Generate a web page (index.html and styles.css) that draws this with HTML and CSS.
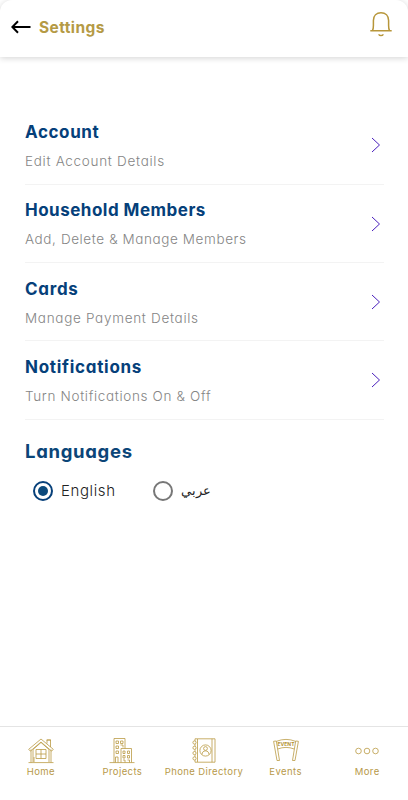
FILE: index.html
```html
<!DOCTYPE html>
<html lang="en">
<head>
<meta charset="utf-8">
<title>Settings</title>
<link rel="stylesheet" href="styles.css">
</head>
<body>
<div class="app">
  <header class="topbar">
    <svg class="back" width="20" height="14" viewBox="0 0 20 14"><path d="M19.5 7H1.5M7 1.2 1.3 7 7 12.8"/></svg>
    <h1>Settings</h1>
    <svg class="bell" width="24" height="28" viewBox="0 0 24 28"><path d="M1.3 20.8h21.4M3.500 20.500c.7-1.300.9-2.500.9-5V10.500C4.400 5.700 7.600 2.700 12 2.700s7.600 3 7.600 7.800v5c0 2.500.2 3.700.9 5M9.600 24.400c1.200 1.600 3.600 1.600 4.800 0"/></svg>
  </header>
  <main>
    <ul class="settings">
      <li><div><h2 class="t-account">Account</h2><p class="s-account">Edit Account Details</p></div><svg class="chevron" width="10" height="16" viewBox="0 0 10 16"><path d="M1 1l7.500 7L1 15"/></svg></li>
      <li><div><h2 class="t-household">Household Members</h2><p class="s-household">Add, Delete &amp; Manage Members</p></div><svg class="chevron" width="10" height="16" viewBox="0 0 10 16"><path d="M1 1l7.500 7L1 15"/></svg></li>
      <li><div><h2 class="t-cards">Cards</h2><p class="s-cards">Manage Payment Details</p></div><svg class="chevron" width="10" height="16" viewBox="0 0 10 16"><path d="M1 1l7.500 7L1 15"/></svg></li>
      <li><div><h2 class="t-notifications">Notifications</h2><p class="s-notifications">Turn Notifications On &amp; Off</p></div><svg class="chevron" width="10" height="16" viewBox="0 0 10 16"><path d="M1 1l7.500 7L1 15"/></svg></li>
    </ul>
    <h2 class="languages">Languages</h2>
    <div class="choices">
      <div class="choice english"><span class="radio on"></span><span>English</span></div>
      <div class="choice"><span class="radio"></span><span class="arabic" lang="ar" dir="rtl">عربي</span></div>
    </div>
  </main>
  <nav class="tabs">
    <div class="tab">
      <svg width="28" height="28" viewBox="0 0 28 28"><path d="M1.500 25.600h25M4 25.500V12.500M24 25.500V12.500M6 25V12.500L14 5.500l8 7V25M14 2 1.700 12.300l1.700 1.800L14 5l10.600 9.100 1.700-1.800zM20 6.500V3h3.500v7M19.500 3h4.500M9 12.500h10v9H9zM14 12.500v9M9 17h10M7 25v-5"/></svg>
      <span>Home</span>
    </div>
    <div class="tab">
      <svg width="28" height="28" viewBox="0 0 28 28"><path d="M1.500 25.600h25M6 25.500V1.500h11v10M13 25.500v-14h10.500v14M8 4h2.500v2.500H8zM12.500 4H15v2.500h-2.500zM8 9h2.500v2.500H8zM12.500 8H15v2.500M8 14h2.500v2.500H8zM7.500 25.500V20H10v5.500M15 14h2v2.500h-2zM19.500 14h2v2.500h-2zM15 18.500h2V21h-2zM19.500 18.500h2V21h-2zM15 23h2v2.500M19.500 23h2v2.500"/></svg>
      <span>Projects</span>
    </div>
    <div class="tab wide">
      <svg width="28" height="28" viewBox="0 0 28 28"><path d="M5 1.800h17v23.400H5zM22 1.800h3v23.400h-3M7.500 2v23"/><circle cx="15.500" cy="13.500" r="5.600"/><circle cx="15.500" cy="11.500" r="1.900"/><path d="M12 17.500c.2-2.300 1.200-3.600 3.500-3.600s3.300 1.300 3.500 3.600"/><g class="rings"><circle cx="4.500" cy="5.500" r="1.600"/><circle cx="4.500" cy="10.800" r="1.600"/><circle cx="4.500" cy="16.100" r="1.600"/><circle cx="4.500" cy="21.400" r="1.600"/></g></svg>
      <span>Phone Directory</span>
    </div>
    <div class="tab">
      <svg width="28" height="28" viewBox="0 0 28 28"><path d="M1.600 4.300l2.700-.3 3.200 19.500H5zM26.400 4.300l-2.700-.3-3.200 19.500H23zM4.500 4.300Q14 .5 23.500 4.300M5.800 12Q14 8.800 22.200 12"/><text class="banner" x="14" y="9" text-anchor="middle">EVENT</text></svg>
      <span>Events</span>
    </div>
    <div class="tab">
      <svg width="28" height="28" viewBox="0 0 28 28"><circle cx="5.500" cy="14" r="2.800"/><circle cx="14" cy="14" r="2.800"/><circle cx="22.500" cy="14" r="2.800"/></svg>
      <span>More</span>
    </div>
  </nav>
</div>
</body>
</html>
```
FILE: styles.css
```css
* { box-sizing: border-box; }
body { margin: 0; background: #fff; font-family: Inter, "Liberation Sans", sans-serif; font-feature-settings: "cv11" 1; }
h1, h2, p, ul { margin: 0; padding: 0; }
svg { display: block; flex: none; fill: none; }
.app { height: 800px; display: flex; flex-direction: column; overflow: hidden; }
.topbar { height: 57px; flex: none; display: flex; align-items: center; padding: 0 15px 3px 11px; border-radius: 12px 12px 0 0; box-shadow: 0 1px 6px rgba(0, 0, 0, .18); }
.back { stroke: #000; stroke-width: 2; }
.topbar h1 { margin: 1px 0 0 8px; font-size: 15.500px; font-weight: 700; color: #b59a45; line-height: 20px; flex: 1; letter-spacing: .4px; }
.bell { stroke: #b7963a; stroke-width: 1.500; margin-top: -6px; }
main { flex: 1; padding: 49.400px 24px 0 25px; }
.settings { list-style: none; }
.settings li { height: 78.300px; border-bottom: 1px solid #f3f3f3; display: flex; justify-content: space-between; padding: 15.700px 3px 0 0; }
.settings h2 { font-size: 17px; line-height: 20px; font-weight: 700; color: #05407a; letter-spacing: .6px; }
.settings .t-household { letter-spacing: .49px; }
.settings .t-cards, .settings .t-notifications { letter-spacing: .71px; }
.settings p { font-size: 13.500px; line-height: 20px; margin-top: 9px; font-weight: 300; color: #858585; letter-spacing: .7px; }
.settings .s-household { letter-spacing: .6px; }
.settings .s-notifications { letter-spacing: .66px; }
.chevron { margin-top: 15.300px; stroke: #4a20bd; stroke-width: 1; }
.languages { margin-top: 19px; font-size: 18.500px; line-height: 24px; color: #0b4578; letter-spacing: .68px; }
.choices { display: flex; margin: 16.300px 0 0 8px; }
.choice { display: flex; align-items: center; height: 24px; gap: 8px; font-size: 15px; font-weight: 300; color: #222; }
.english { width: 120px; letter-spacing: .6px; }
.radio { width: 20px; height: 20px; border: 2px solid #777; border-radius: 50%; display: grid; place-items: center; }
.radio.on { border-color: #07407a; }
.radio.on::after { content: ""; width: 10px; height: 10px; border-radius: 50%; background: #0b4a7d; }
.arabic { font-family: "DejaVu Sans", sans-serif; font-size: 13px; }
.tabs { height: 74px; flex: none; border-top: 1px solid #e4e4e4; display: grid; grid-template-columns: repeat(5, 1fr); padding-top: 10px; }
.tab { display: flex; flex-direction: column; align-items: center; color: #b7994a; font-size: 9.500px; line-height: 14px; letter-spacing: .4px; white-space: nowrap; }
.tab svg { stroke: #ba9b44; stroke-width: .8; }
.tab .rings { fill: #fff; }
.banner { fill: #b28f32; stroke: none; font-size: 5px; font-weight: 700; letter-spacing: 0; }
```
